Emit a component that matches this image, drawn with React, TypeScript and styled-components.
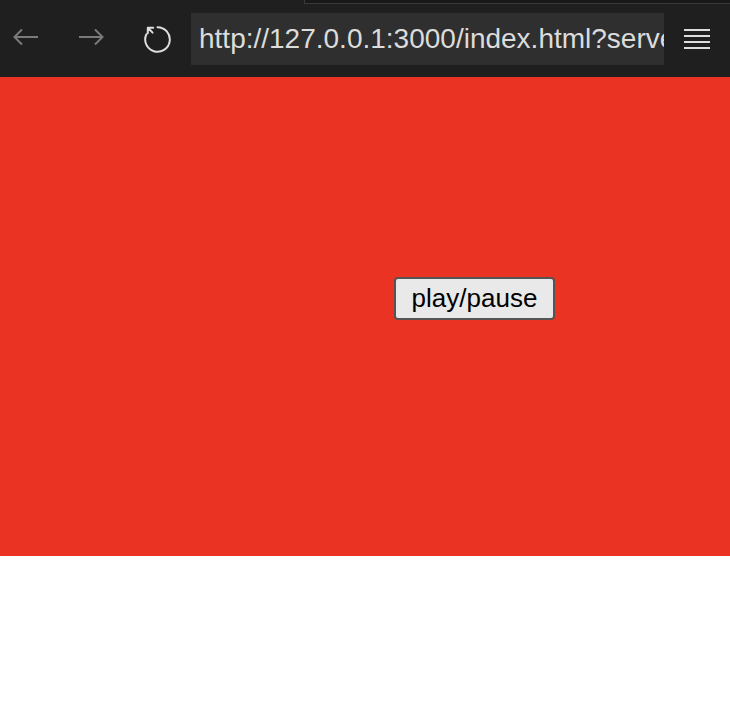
import React from "react"
import styled, { createGlobalStyle } from "styled-components"

const GlobalStyle = createGlobalStyle`
    html, body {
        margin: 0;
        padding: 0;
        background: #ffffff;
        font-family: "Liberation Sans", Arial, sans-serif;
    }
`

const Toolbar = styled.div`
    position: relative;
    height: 77px;
    background: #1f1f1f;
    display: flex;
    align-items: center;
    gap: 15px;
`

const TabEdge = styled.div`
    position: absolute;
    top: 0;
    left: 304px;
    right: 0;
    height: 3px;
    background: #181818;
    border-left: 1px solid #3a3a3a;
    border-bottom: 1px solid #3a3a3a;
`

const NavButton = styled.div<{ $dim?: boolean }>`
    width: 51px;
    height: 52px;
    display: flex;
    align-items: center;
    justify-content: center;
    color: ${(p) => (p.$dim ? "#7a7a7a" : "#dddddd")};
    flex-shrink: 0;
`

const UrlBox = styled.div`
    width: 473px;
    height: 52px;
    margin-left: -7px;
    flex-shrink: 0;
    background: #2f2f2f;
    display: flex;
    align-items: center;
    padding-left: 8px;
    box-sizing: border-box;
    overflow: hidden;
    white-space: nowrap;
    color: #dcdcdc;
    font-family: "Liberation Sans", Arial, sans-serif;
    font-size: 28px;
`

const MenuButton = styled.div`
    flex: 1;
    display: flex;
    align-items: center;
    justify-content: center;
    color: #dddddd;
    margin-left: -15px;
    padding-top: 1px;
`

const Stage = styled.div`
    height: 479px;
    background: #ea3323;
    padding: 200px 0 0 394px;
    box-sizing: border-box;
`

const PlayButton = styled.button`
    width: 161px;
    height: 43px;
    background: #e9e9e9;
    border: 2px solid #555555;
    border-radius: 4px;
    font-family: "Liberation Sans", Arial, sans-serif;
    font-size: 26px;
    color: #000000;
    padding: 0;
    cursor: pointer;
`

function Arrow({ back }: { back?: boolean }) {
    return (
        <svg width="27" height="20" viewBox="0 0 27 20" fill="none" stroke="currentColor" strokeWidth="2" style={{ marginTop: -3 }}>
            {back ? (
                <path d="M26 10H2.5M10 2.5L2.5 10l7.5 7.5" />
            ) : (
                <path d="M1 10h23.5M17 2.5l7.5 7.5-7.5 7.5" />
            )}
        </svg>
    )
}

function Reload() {
    return (
        <svg width="30" height="30" viewBox="0 0 30 30" fill="none" stroke="currentColor" strokeWidth="2" strokeLinecap="round" strokeLinejoin="round">
            <path d="M14.5 3.2A12.3 12.3 0 1 1 3.4 10.2" />
            <path d="M4.8 3.8L9.6 8.6M4.8 3.8h5.4M4.8 3.8v5.4" />
        </svg>
    )
}

function Hamburger() {
    return (
        <svg width="26" height="22" viewBox="0 0 26 22" fill="currentColor">
            <rect x="0" y="1" width="26" height="2" />
            <rect x="0" y="7" width="26" height="2" />
            <rect x="0" y="13" width="26" height="2" />
            <rect x="0" y="19" width="26" height="2" />
        </svg>
    )
}

export default function App() {
    return (
        <>
            <GlobalStyle />
            <Toolbar>
                <TabEdge />
                <NavButton $dim><Arrow back /></NavButton>
                <NavButton $dim><Arrow /></NavButton>
                <NavButton><Reload /></NavButton>
                <UrlBox>http://127.0.0.1:3000/index.html?server=ws://127.0.0.1:3000</UrlBox>
                <MenuButton><Hamburger /></MenuButton>
            </Toolbar>
            <Stage>
                <PlayButton>play/pause</PlayButton>
            </Stage>
        </>
    )
}
